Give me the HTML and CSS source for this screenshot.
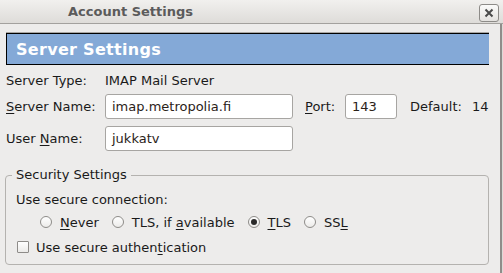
FILE: index.html
```html
<!DOCTYPE html>
<html lang="en">
<head>
    <meta charset="UTF-8">
    <title>Account Settings</title>
    <link rel="stylesheet" href="styles.css">
</head>
<body>
    <div class="window">
        <div class="titlebar">
            <span class="title">Account Settings</span>
            <span class="close-btn">
                <svg width="10" height="10" viewBox="0 0 10 10">
                    <path d="M1.5 1.5 L8.5 8.5 M8.5 1.5 L1.5 8.5" stroke="#4a4a4a" stroke-width="2" fill="none"/>
                </svg>
            </span>
        </div>
        <div class="body-row">
            <div class="content">
                <div class="page-header">Server Settings</div>

                <div class="row row-text">
                    <span class="label">Server Type:</span>
                    <span>IMAP Mail Server</span>
                </div>
                <div class="row">
                    <span class="label"><u>S</u>erver Name:</span>
                    <span class="input input-wide">imap.metropolia.fi</span>
                    <span class="port-label"><u>P</u>ort:</span>
                    <span class="input input-port">143</span>
                    <span class="default-label">Default:</span>
                    <span class="default-val">14</span>
                </div>
                <div class="row">
                    <span class="label">User <u>N</u>ame:</span>
                    <span class="input input-wide">jukkatv</span>
                </div>

                <fieldset class="group">
                    <legend>Security Settings</legend>
                    <div class="group-line">Use secure connection:</div>
                    <div class="radio-row">
                        <span class="option"><span class="radio"></span><span><u>N</u>ever</span></span>
                        <span class="option"><span class="radio"></span><span>TLS, if <u>a</u>vailable</span></span>
                        <span class="option"><span class="radio checked"></span><span><u>T</u>LS</span></span>
                        <span class="option"><span class="radio"></span><span>SS<u>L</u></span></span>
                    </div>
                    <div class="check-row">
                        <span class="checkbox"></span>
                        <span>Use secure authen<u>t</u>ication</span>
                    </div>
                </fieldset>
            </div>
            <div class="edge"></div>
        </div>
    </div>
</body>
</html>
```

FILE: styles.css
```css
html, body {
    margin: 0;
    padding: 0;
}
body {
    width: 503px;
    height: 273px;
    overflow: hidden;
    background-color: #edeceb;
    font-family: "DejaVu Sans", "Liberation Sans", sans-serif;
    font-size: 13px;
    color: #1a1a1a;
}
u {
    text-decoration-thickness: 1px;
    text-underline-offset: 2px;
}
.window {
    display: flex;
    flex-direction: column;
    height: 273px;
}
.titlebar {
    height: 23px;
    display: flex;
    align-items: center;
    justify-content: space-between;
    background: linear-gradient(#f1f0ee, #dedcd9);
    border-bottom: 1px solid #a3a19e;
    flex-shrink: 0;
}
.title {
    padding-left: 68px;
    font-weight: bold;
    color: #5b5b5b;
}
.close-btn {
    width: 18px;
    height: 16px;
    margin-right: 4px;
    margin-top: 2px;
    border: 1px solid #8d8b88;
    border-radius: 3px;
    background: linear-gradient(#fbfbfa, #e4e2df);
    display: flex;
    align-items: center;
    justify-content: center;
}
.body-row {
    flex: 1;
    display: flex;
}
.content {
    width: 500px;
    padding: 9px 0 0 6px;
    box-sizing: border-box;
}
.edge {
    width: 3px;
    border-left: 2px solid #8f8d8a;
    background-color: #dcdad7;
    box-sizing: border-box;
}
.page-header {
    width: 483px;
    height: 32px;
    box-sizing: border-box;
    border: 1px solid #000;
    border-right: none;
    box-shadow: 0 -1px 0 #a9a7a4;
    background-color: #84a9d7;
    color: #ffffff;
    font-weight: bold;
    font-size: 16px;
    letter-spacing: 0.3px;
    padding-left: 9px;
    display: flex;
    align-items: center;
}
.row {
    display: flex;
    align-items: center;
    height: 25px;
    margin-top: 7px;
}
.row-text {
    height: 18px;
    margin-top: 6px;
    margin-bottom: -2px;
}
.label {
    width: 99px;
    flex-shrink: 0;
}
.input {
    height: 25px;
    box-sizing: border-box;
    border: 1px solid #a7a5a2;
    border-radius: 3px;
    background-color: #ffffff;
    padding-left: 6px;
    display: flex;
    align-items: center;
    color: #2b2218;
}
.input-wide {
    width: 188px;
}
.input-port {
    width: 52px;
}
.port-label {
    margin-left: 12px;
    width: 40px;
}
.default-label {
    margin-left: 13px;
    width: 62px;
}
.group {
    margin: 15px 0 0 -1px;
    width: 484px;
    box-sizing: border-box;
    border: 1px solid #b4b2af;
    border-radius: 4px;
    padding: 0 10px 8px 10px;
}
.group legend {
    padding: 0 4px;
    margin-left: -4px;
    line-height: 18px;
}
.group-line {
    line-height: 18px;
    margin-top: 7px;
}
.radio-row {
    display: flex;
    align-items: center;
    height: 18px;
    margin-top: 4px;
    padding-left: 24px;
}
.option {
    display: flex;
    align-items: center;
    gap: 8px;
    margin-right: 13px;
}
.radio {
    width: 12px;
    height: 12px;
    box-sizing: border-box;
    border: 1px solid #8e8c89;
    border-radius: 50%;
    background: linear-gradient(#ffffff, #ecebe9);
    display: flex;
    align-items: center;
    justify-content: center;
}
.radio.checked::after {
    content: "";
    width: 6px;
    height: 6px;
    border-radius: 50%;
    background-color: #2a2a2a;
}
.check-row {
    display: flex;
    align-items: center;
    gap: 7px;
    height: 18px;
    margin-top: 7px;
    padding-left: 1px;
}
.checkbox {
    width: 12px;
    height: 12px;
    box-sizing: border-box;
    border: 1px solid #8e8c89;
    border-radius: 1px;
    background: linear-gradient(#ffffff, #ecebe9);
}
```
